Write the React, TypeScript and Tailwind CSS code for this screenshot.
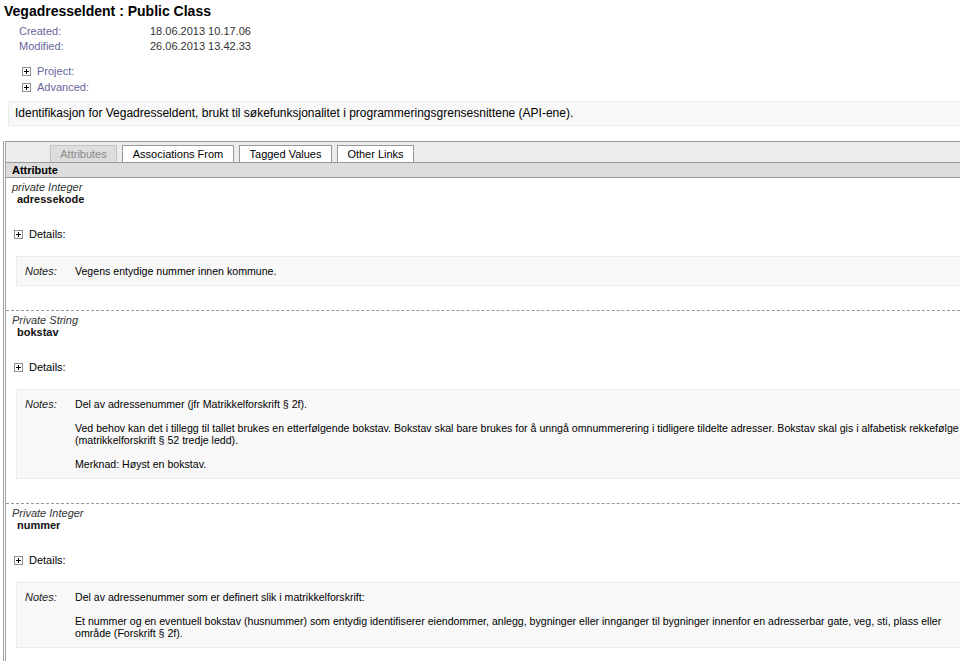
import React from "react";

function Plus() {
  return (
    <svg width="9" height="9" viewBox="0 0 9 9" className="shrink-0">
      <rect x="0.5" y="0.5" width="8" height="8" fill="#fff" stroke="#8c8c8c" />
      <path d="M2 4.5h5M4.5 2v5" stroke="#000" strokeWidth="1" />
    </svg>
  );
}

type Item = { type: string; name: string; notes: React.ReactNode[] };

const items: Item[] = [
  {
    type: "private Integer",
    name: "adressekode",
    notes: ["Vegens entydige nummer innen kommune."],
  },
  {
    type: "Private String",
    name: "bokstav",
    notes: [
      "Del av adressenummer (jfr Matrikkelforskrift § 2f).",
      <>
        Ved behov kan det i tillegg til tallet brukes en etterfølgende bokstav. Bokstav skal bare brukes for å unngå omnummerering i tidligere tildelte adresser. Bokstav skal gis i alfabetisk rekkefølge
        <br />
        (matrikkelforskrift § 52 tredje ledd).
      </>,
      "Merknad: Høyst en bokstav.",
    ],
  },
  {
    type: "Private Integer",
    name: "nummer",
    notes: [
      "Del av adressenummer som er definert slik i matrikkelforskrift:",
      <>
        Et nummer og en eventuell bokstav (husnummer) som entydig identifiserer eiendommer, anlegg, bygninger eller innganger til bygninger innenfor en adresserbar gate, veg, sti, plass eller
        <br />
        område (Forskrift § 2f).
      </>,
    ],
  },
];

export default function App() {
  return (
    <div className="w-[960px] h-[661px] overflow-hidden bg-white font-['Liberation_Sans',Arial,sans-serif] text-black">
      <div className="w-[1000px]">
        <h1 className="pl-[4px] pt-[3px] text-[14px] font-bold leading-[17px] text-black">
          Vegadresseldent : Public Class
        </h1>

        <div className="mt-[4px] pl-[19px] text-[11px] leading-[15px]">
          <div className="flex">
            <span className="w-[131px] text-[#66669a]">Created:</span>
            <span className="text-[#333]">18.06.2013 10.17.06</span>
          </div>
          <div className="flex">
            <span className="w-[131px] text-[#66669a]">Modified:</span>
            <span className="text-[#333]">26.06.2013 13.42.33</span>
          </div>
        </div>

        <div className="mt-[9px] pl-[22px] text-[11px] leading-[16px] text-[#66669a]">
          <div className="flex items-center gap-[6px]">
            <Plus />
            <span>Project:</span>
          </div>
          <div className="flex items-center gap-[6px]">
            <Plus />
            <span>Advanced:</span>
          </div>
        </div>

        <div className="ml-[8px] mt-[6px] border border-[#ebebeb] bg-[#f8f8f8] px-[6px] py-[4px] text-[12px] leading-[15px] text-black">
          Identifikasjon for Vegadresseldent, brukt til søkefunksjonalitet i programmeringsgrensesnittene (API-ene).
        </div>

        <div className="ml-[3px] mt-[15px] border-l-[3px] border-double border-l-[#a0a0a0]">
          <div className="border-t border-[#999] bg-[#ececec] pl-[44px] pt-[3px]">
            <div className="flex gap-[5px] text-[11px] leading-[15px]">
              <div className="w-[67px] border border-b-0 border-[#c4c4c4] bg-[#dddddd] pt-[1px] text-center text-[#8a8a8a]">
                Attributes
              </div>
              <div className="w-[112px] border border-b-0 border-[#999] bg-white pt-[1px] text-center">Associations From</div>
              <div className="w-[93px] border border-b-0 border-[#999] bg-white pt-[1px] text-center">Tagged Values</div>
              <div className="w-[77px] border border-b-0 border-[#999] bg-white pt-[1px] text-center">Other Links</div>
            </div>
          </div>
          <div className="border-t border-b border-t-[#999] border-b-[#999] border-b-dashed bg-[#dddddd] pl-[6px] text-[11px] font-bold leading-[14px]">
            Attribute
          </div>

          {items.map((it, i) => (
            <div key={i} className="border-b border-dashed border-[#999] pl-[6px] pt-[3px] pb-[24px] text-[11px] leading-[12px]">
              <div className="italic text-[#333]">{it.type}</div>
              <div className="pl-[5px] font-bold text-[#111]">{it.name}</div>
              <div className="ml-[2px] mt-[23px] flex items-center gap-[6px]">
                <Plus />
                <span>Details:</span>
              </div>
              <div className="ml-[4px] mt-[16px] flex border border-[#ebebeb] bg-[#f8f8f8] py-[8px] pl-[8px] pr-[8px]">
                <div className="w-[50px] shrink-0 italic text-[#222]">Notes:</div>
                <div className="whitespace-nowrap text-[10.6px] text-black">
                  {it.notes.map((n, j) => (
                    <div key={j} className={j > 0 ? "mt-[12px]" : ""}>
                      {n}
                    </div>
                  ))}
                </div>
              </div>
            </div>
          ))}
        </div>
      </div>
    </div>
  );
}
